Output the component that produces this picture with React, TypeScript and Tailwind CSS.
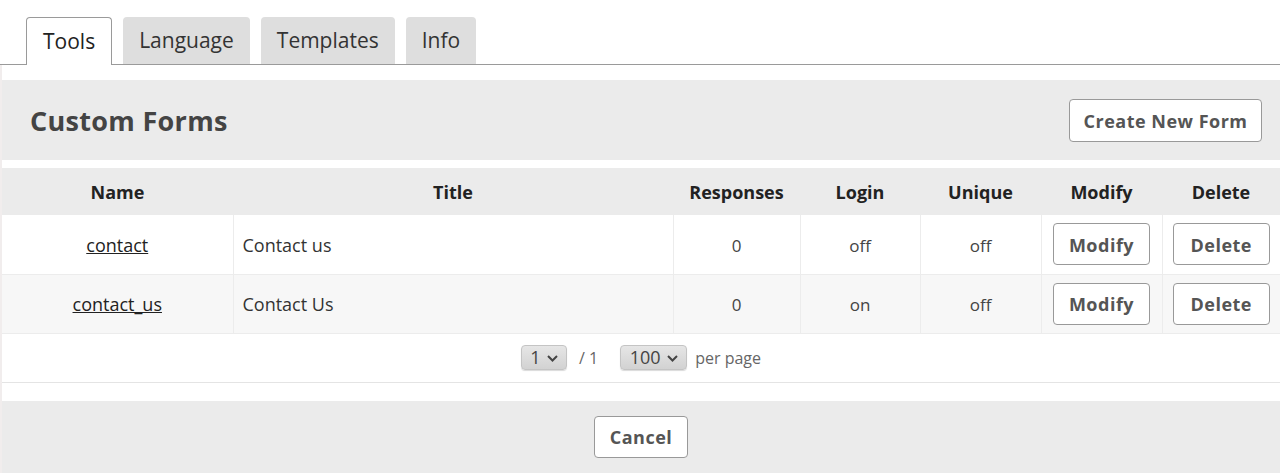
import { useState } from 'react'

const rows = [
  { name: 'contact', title: 'Contact us', responses: 0, login: 'off', unique: 'off' },
  { name: 'contact_us', title: 'Contact Us', responses: 0, login: 'on', unique: 'off' },
]

const tabs = ['Tools', 'Language', 'Templates', 'Info']

function Btn({ children, className = '' }: { children: React.ReactNode; className?: string }) {
  return (
    <button
      className={`bg-white border border-[#999] rounded-[4px] font-bold text-[#555] tracking-[0.5px] ${className}`}
    >
      {children}
    </button>
  )
}

function Select({ value, width }: { value: string; width: string }) {
  return (
    <span
      className={`inline-flex items-center justify-center gap-1.5 h-[25px] rounded-[4px] bg-gradient-to-b from-[#e6e6e6] to-[#d2d2d2] border border-[#c4c4c4] shadow-[0_1px_1px_rgba(0,0,0,0.15)] text-[18px] text-[#444] ${width}`}
    >
      {value}
      <svg width="11" height="7" viewBox="0 0 11 7" className="mt-0.5">
        <path d="M1 1l4.5 4.5L10 1" fill="none" stroke="#444" strokeWidth="2" />
      </svg>
    </span>
  )
}

export default function App() {
  const [active, setActive] = useState('Tools')

  return (
    <div className="w-[1280px] h-[473px] overflow-hidden bg-white font-['Open_Sans',sans-serif] text-[#333]">
      {/* tabs */}
      <div className="flex items-end gap-[11px] pl-[26px] pt-[18px] border-b border-[#9a9a9a] h-[65px]">
        {tabs.map((t) => (
          <button
            key={t}
            onClick={() => setActive(t)}
            className={`h-[47px] px-[16px] rounded-t-[4px] text-[21px] ${
              active === t
                ? 'bg-white border border-b-0 border-[#9a9a9a] text-[#222] -mb-px h-[48px]'
                : 'bg-[#dedede] text-[#333]'
            }`}
          >
            {t}
          </button>
        ))}
      </div>

      <div className="border-l-2 border-[#f1eded]">
        <div className="h-[15px]" />
        {/* title bar */}
        <div className="bg-[#ebebeb] h-[80px] flex items-center justify-between pl-[28px] pr-[18px]">
          <h1 className="text-[27px] font-bold text-[#444] tracking-[0.3px] pt-0.5">Custom Forms</h1>
          <Btn className="h-[43px] w-[193px] text-[18px] pt-0.5">Create New Form</Btn>
        </div>
        <div className="h-[8px]" />

        {/* table */}
        <table className="w-full border-collapse text-[18px]">
          <thead>
            <tr className="bg-[#ebebeb] h-[47px] text-[18px] text-[#222]">
              <th className="w-[231px] font-bold pt-0.5">Name</th>
              <th className="w-[440px] font-bold pt-0.5">Title</th>
              <th className="w-[127px] font-bold pt-0.5">Responses</th>
              <th className="w-[120px] font-bold pt-0.5">Login</th>
              <th className="w-[121px] font-bold pt-0.5">Unique</th>
              <th className="w-[121px] font-bold pt-0.5">Modify</th>
              <th className="font-bold pt-0.5">Delete</th>
            </tr>
          </thead>
          <tbody>
            {rows.map((r, i) => (
              <tr
                key={r.name}
                className={`h-[59px] border-b border-[#ececec] ${i % 2 ? 'bg-[#f7f7f7]' : 'bg-white'}`}
              >
                <td className="text-center border-r border-[#ececec] pt-0.5">
                  <a href="#" className="underline text-[#222]">
                    {r.name}
                  </a>
                </td>
                <td className="pl-[9px] border-r border-[#ececec] text-[#333] pt-0.5">{r.title}</td>
                <td className="text-center border-r border-[#ececec] text-[#444] text-[17px] pt-0.5">{r.responses}</td>
                <td className="text-center border-r border-[#ececec] text-[#444] text-[17px] pt-0.5">{r.login}</td>
                <td className="text-center border-r border-[#ececec] text-[#444] text-[17px] pt-0.5">{r.unique}</td>
                <td className="text-center border-r border-[#ececec]">
                  <Btn className="h-[42px] w-[97px] text-[18px] pt-0.5">Modify</Btn>
                </td>
                <td className="text-center">
                  <Btn className="h-[42px] w-[97px] text-[18px] pt-0.5">Delete</Btn>
                </td>
              </tr>
            ))}
          </tbody>
        </table>

        {/* pagination */}
        <div className="h-[49px] flex items-center justify-center border-b border-[#e4e4e4] text-[16px] text-[#666]">
          <Select value="1" width="w-[46px]" />
          <span className="ml-[12px] mr-[22px]">/ 1</span>
          <Select value="100" width="w-[67px]" />
          <span className="ml-[8px]">per page</span>
        </div>
        <div className="h-[18px]" />

        {/* footer */}
        <div className="bg-[#ebebeb] h-[72px] flex items-center justify-center">
          <Btn className="h-[42px] w-[94px] text-[18px] pt-0.5">Cancel</Btn>
        </div>
      </div>
    </div>
  )
}
